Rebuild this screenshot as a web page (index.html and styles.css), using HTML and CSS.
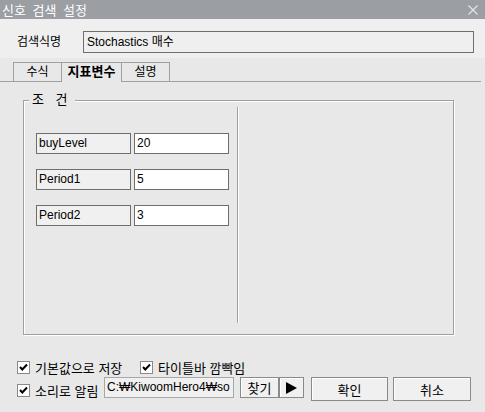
FILE: index.html
```html
<!DOCTYPE html>
<html lang="ko">
<head>
    <meta charset="UTF-8">
    <title>신호 검색 설정</title>
    <link rel="stylesheet" href="styles.css">
</head>
<body>
    <div class="window">
        <div class="titlebar">
            <span class="title">신호 검색 설정</span>
            <svg class="close" width="10" height="10" viewBox="0 0 10 10">
                <path d="M0.5 0.5 L9.5 9.5 M9.5 0.5 L0.5 9.5" stroke="#e4e4e4" stroke-width="1.2" fill="none"/>
            </svg>
        </div>

        <div class="name-row">
            <span class="name-label">검색식명</span>
            <div class="name-box">Stochastics 매수</div>
        </div>

        <div class="tabs">
            <div class="tab tab-first">수식</div>
            <div class="tab active">지표변수</div>
            <div class="tab">설명</div>
        </div>

        <div class="group">
            <span class="group-title">조 건</span>
            <div class="params">
                <div class="param-row">
                    <div class="param-name">buyLevel</div>
                    <div class="param-value">20</div>
                </div>
                <div class="param-row">
                    <div class="param-name">Period1</div>
                    <div class="param-value">5</div>
                </div>
                <div class="param-row">
                    <div class="param-name">Period2</div>
                    <div class="param-value">3</div>
                </div>
            </div>
            <div class="divider"></div>
        </div>

        <div class="options">
            <div class="opt-row">
                <label class="opt opt-default">
                    <span class="check"><svg width="11" height="11" viewBox="0 0 11 11"><path d="M2 5 L4.3 7.5 L9 2.5" stroke="#000" stroke-width="2" fill="none"/></svg></span>
                    기본값으로 저장
                </label>
                <label class="opt">
                    <span class="check"><svg width="11" height="11" viewBox="0 0 11 11"><path d="M2 5 L4.3 7.5 L9 2.5" stroke="#000" stroke-width="2" fill="none"/></svg></span>
                    타이틀바 깜빡임
                </label>
            </div>
            <div class="opt-row">
                <label class="opt opt-sound">
                    <span class="check"><svg width="11" height="11" viewBox="0 0 11 11"><path d="M2 5 L4.3 7.5 L9 2.5" stroke="#000" stroke-width="2" fill="none"/></svg></span>
                    소리로 알림
                </label>
                <div class="path-box">C:₩KiwoomHero4₩so</div>
                <button class="btn btn-find">찾기</button>
                <button class="btn btn-play">
                    <svg width="11" height="12" viewBox="0 0 11 12"><polygon points="0,0 11,6 0,12" fill="#000"/></svg>
                </button>
                <button class="btn btn-ok">확인</button>
                <button class="btn btn-cancel">취소</button>
            </div>
        </div>
    </div>
</body>
</html>
```

FILE: styles.css
```css
* {
    box-sizing: border-box;
}
body {
    margin: 0;
    background-color: #e8e8e8;
    font-family: "Liberation Sans", "Noto Sans CJK KR", sans-serif;
    font-size: 12px;
    color: #000;
}
.window {
    width: 485px;
    height: 412px;
    overflow: hidden;
}

/* 타이틀바 */
.titlebar {
    height: 19px;
    background-color: #9b9ea3;
    display: flex;
    align-items: center;
    justify-content: space-between;
    padding: 0 7px 0 2px;
    color: #fff;
    font-size: 13px;
}
.title {
    word-spacing: 3px;
}
.close {
    display: block;
}

/* 검색식명 */
.name-row {
    height: 39px;
    background-color: #efefef;
    display: flex;
    align-items: flex-start;
    padding-top: 12px;
}
.name-label {
    width: 83px;
    padding-left: 17px;
    line-height: 22px;
}
.name-box {
    width: 391px;
    height: 22px;
    border: 1px solid #6e6e6e;
    line-height: 20px;
    padding-left: 3px;
}

/* 탭 */
.tabs {
    display: flex;
    margin-top: 4px;
    margin-right: 4px;
    padding-left: 13px;
    border-bottom: 1px solid #a0a0a0;
    height: 20px;
}
.tab {
    width: 49px;
    height: 19px;
    border: 1px solid #a0a0a0;
    border-bottom: none;
    margin-left: -1px;
    text-align: center;
    line-height: 18px;
}
.tab-first {
    margin-left: 0;
}
.tab.active {
    width: 61px;
    height: 20px;
    font-weight: bold;
    font-size: 13px;
    background-color: #e8e8e8;
}

/* 조건 그룹 */
.group {
    position: relative;
    display: flex;
    margin: 18px 0 0 23px;
    width: 431px;
    height: 235px;
    border: 1px solid #a0a0a0;
    box-shadow: 1px 1px 0 #fff, inset 1px 1px 0 #fff;
}
.group-title {
    position: absolute;
    top: -8px;
    left: 5px;
    padding: 0 3px;
    background-color: #e8e8e8;
    font-size: 13px;
    letter-spacing: 4px;
    line-height: 14px;
}
.params {
    width: 213px;
    padding: 32px 0 0 12px;
    display: flex;
    flex-direction: column;
    gap: 15px;
}
.param-row {
    display: flex;
    gap: 3px;
}
.param-name,
.param-value {
    width: 95px;
    height: 21px;
    border: 1px solid #6e6e6e;
    padding-left: 2px;
    line-height: 18px;
}
.param-name {
    background-color: #f0f0f0;
}
.param-value {
    background-color: #fff;
}
.divider {
    width: 1px;
    margin: 6px 0 11px;
    background-color: #a0a0a0;
    box-shadow: 1px 0 0 #fff;
}

/* 하단 옵션 */
.options {
    margin-top: 25px;
    display: flex;
    flex-direction: column;
    gap: 3px;
}
.opt-row {
    display: flex;
    align-items: flex-start;
    padding-left: 17px;
}
.opt {
    display: flex;
    align-items: center;
    height: 14px;
    font-size: 13px;
    white-space: nowrap;
}
.opt-default {
    width: 123px;
}
.opt-sound {
    width: 87px;
    margin-top: 6px;
}
.check {
    width: 13px;
    height: 13px;
    margin-right: 5px;
    border: 1px solid #8a8a8a;
    background-color: #fff;
    display: flex;
    align-items: center;
    justify-content: center;
}
.check svg {
    display: block;
}
.path-box {
    width: 130px;
    height: 21px;
    border: 1px solid #a8a8a8;
    background-color: #f0f0f0;
    padding-left: 2px;
    line-height: 19px;
    white-space: nowrap;
    overflow: hidden;
    margin-right: 6px;
}
.btn {
    font-family: inherit;
    font-size: 13px;
    color: #000;
    background-color: #f0f0f0;
    border: 1px solid #8a8a8a;
    box-shadow: inset 1px 1px 0 #fff;
    padding: 0;
    margin: 0;
    display: flex;
    align-items: center;
    justify-content: center;
}
.btn-find {
    width: 39px;
    height: 21px;
}
.btn-play {
    width: 25px;
    height: 21px;
    margin-right: 7px;
}
.btn-ok {
    width: 77px;
    height: 24px;
    margin-right: 5px;
}
.btn-cancel {
    width: 78px;
    height: 24px;
}
```
